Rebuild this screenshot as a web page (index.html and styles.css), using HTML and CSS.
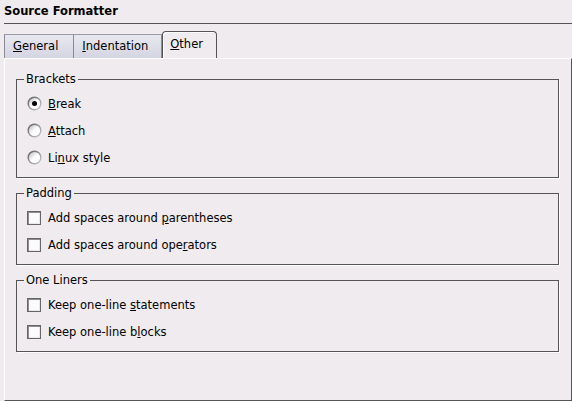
FILE: index.html
```html
<!DOCTYPE html>
<html>
<head>
<meta charset="utf-8">
<link rel="stylesheet" href="styles.css">
</head>
<body>
<div class="page">
  <div class="title">Source Formatter</div>
  <div class="tabs">
    <div class="tab"><u>G</u>eneral</div>
    <div class="tab last"><u>I</u>ndentation</div>
    <div class="tab active"><u>O</u>ther</div>
  </div>
  <div class="panel">
    <fieldset class="group">
      <legend>Brackets</legend>
      <div class="opt">
        <svg class="ico" width="15" height="15" viewBox="0 0 15 15">
          <defs>
            <linearGradient id="rg" x1="0" y1="0" x2="1" y2="1">
              <stop offset="0" stop-color="#585858"/>
              <stop offset="1" stop-color="#d0d0d0"/>
            </linearGradient>
            <linearGradient id="rf" x1="0" y1="0" x2="1" y2="1">
              <stop offset="0" stop-color="#b8b8b8"/>
              <stop offset="0.5" stop-color="#ffffff"/>
              <stop offset="1" stop-color="#ffffff"/>
            </linearGradient>
          </defs>
          <circle cx="7.5" cy="7.5" r="7" fill="url(#rg)"/>
          <circle cx="7.5" cy="7.5" r="5.6" fill="url(#rf)"/>
          <circle cx="7.5" cy="7.5" r="2.5" fill="#000"/>
        </svg>
        <span><u>B</u>reak</span>
      </div>
      <div class="opt">
        <svg class="ico" width="15" height="15" viewBox="0 0 15 15">
          <circle cx="7.5" cy="7.5" r="7" fill="url(#rg)"/>
          <circle cx="7.5" cy="7.5" r="5.6" fill="url(#rf)"/>
        </svg>
        <span><u>A</u>ttach</span>
      </div>
      <div class="opt">
        <svg class="ico" width="15" height="15" viewBox="0 0 15 15">
          <circle cx="7.5" cy="7.5" r="7" fill="url(#rg)"/>
          <circle cx="7.5" cy="7.5" r="5.6" fill="url(#rf)"/>
        </svg>
        <span>Li<u>n</u>ux style</span>
      </div>
    </fieldset>
    <fieldset class="group">
      <legend>Padding</legend>
      <div class="opt"><span class="check"></span><span>Add spaces around <u>p</u>arentheses</span></div>
      <div class="opt"><span class="check"></span><span>Add spaces around ope<u>r</u>ators</span></div>
    </fieldset>
    <fieldset class="group">
      <legend>One Liners</legend>
      <div class="opt"><span class="check"></span><span>Keep one-line <u>s</u>tatements</span></div>
      <div class="opt"><span class="check"></span><span>Keep one-line b<u>l</u>ocks</span></div>
    </fieldset>
  </div>
</div>
</body>
</html>
```
FILE: styles.css
```css
html, body {
  margin: 0;
  padding: 0;
  background: #efebef;
}
body {
  font-family: "DejaVu Sans", Verdana, sans-serif;
  font-size: 11.5px;
  color: #000;
}
.page {
  height: 401px;
  display: flex;
  flex-direction: column;
  padding-left: 4px;
  box-sizing: border-box;
}
.title {
  font-weight: bold;
  font-size: 11.5px;
  height: 24px;
  line-height: 15px;
  padding-top: 4px;
  box-sizing: border-box;
  border-bottom: 1px solid #555;
}
.tabs {
  height: 34px;
  display: flex;
  align-items: flex-end;
}
.tab {
  height: 24px;
  box-sizing: border-box;
  line-height: 23px;
  padding: 0 15px 0 8px;
  background: linear-gradient(#e8e8f0, #d4d5e2);
  border-top: 1px solid #9a9aa6;
  border-left: 1px solid #8a8a94;
}
.tab.last {
  border-right: 1px solid #8a8a94;
  padding-right: 13px;
}
.tab.active {
  height: 27px;
  line-height: 25px;
  background: #efebef;
  border: 1px solid #555;
  border-bottom: none;
  border-radius: 4px 4px 0 0;
  box-shadow: inset 1px 1px 0 #fff;
  padding: 0 13px 0 7px;
}
.panel {
  flex: 1;
  border-top: 1px solid #fff;
  border-left: 1px solid #fff;
  border-right: 1px solid #555;
  border-bottom: 1px solid #555;
  padding: 13px 12px 0 11px;
}
.group {
  margin: 0 0 8px 0;
  border: 1px solid #555;
  box-shadow: 1px 1px 0 #fff;
  padding: 4px 10px 6px 7px;
}
.group legend {
  padding: 0 2px;
  line-height: 14px;
}
.opt {
  display: flex;
  align-items: center;
  height: 27px;
  gap: 6px;
  margin-left: 3px;
}
.ico {
  display: block;
  flex: none;
}
.check {
  width: 14px;
  height: 14px;
  box-sizing: border-box;
  flex: none;
  border: 1px solid #666;
  background: #fbfbfb;
  box-shadow: inset 1px 1px 0 #8c8c8c, inset -1px -1px 0 #e8e8e8;
  margin-right: 1px;
}
```
